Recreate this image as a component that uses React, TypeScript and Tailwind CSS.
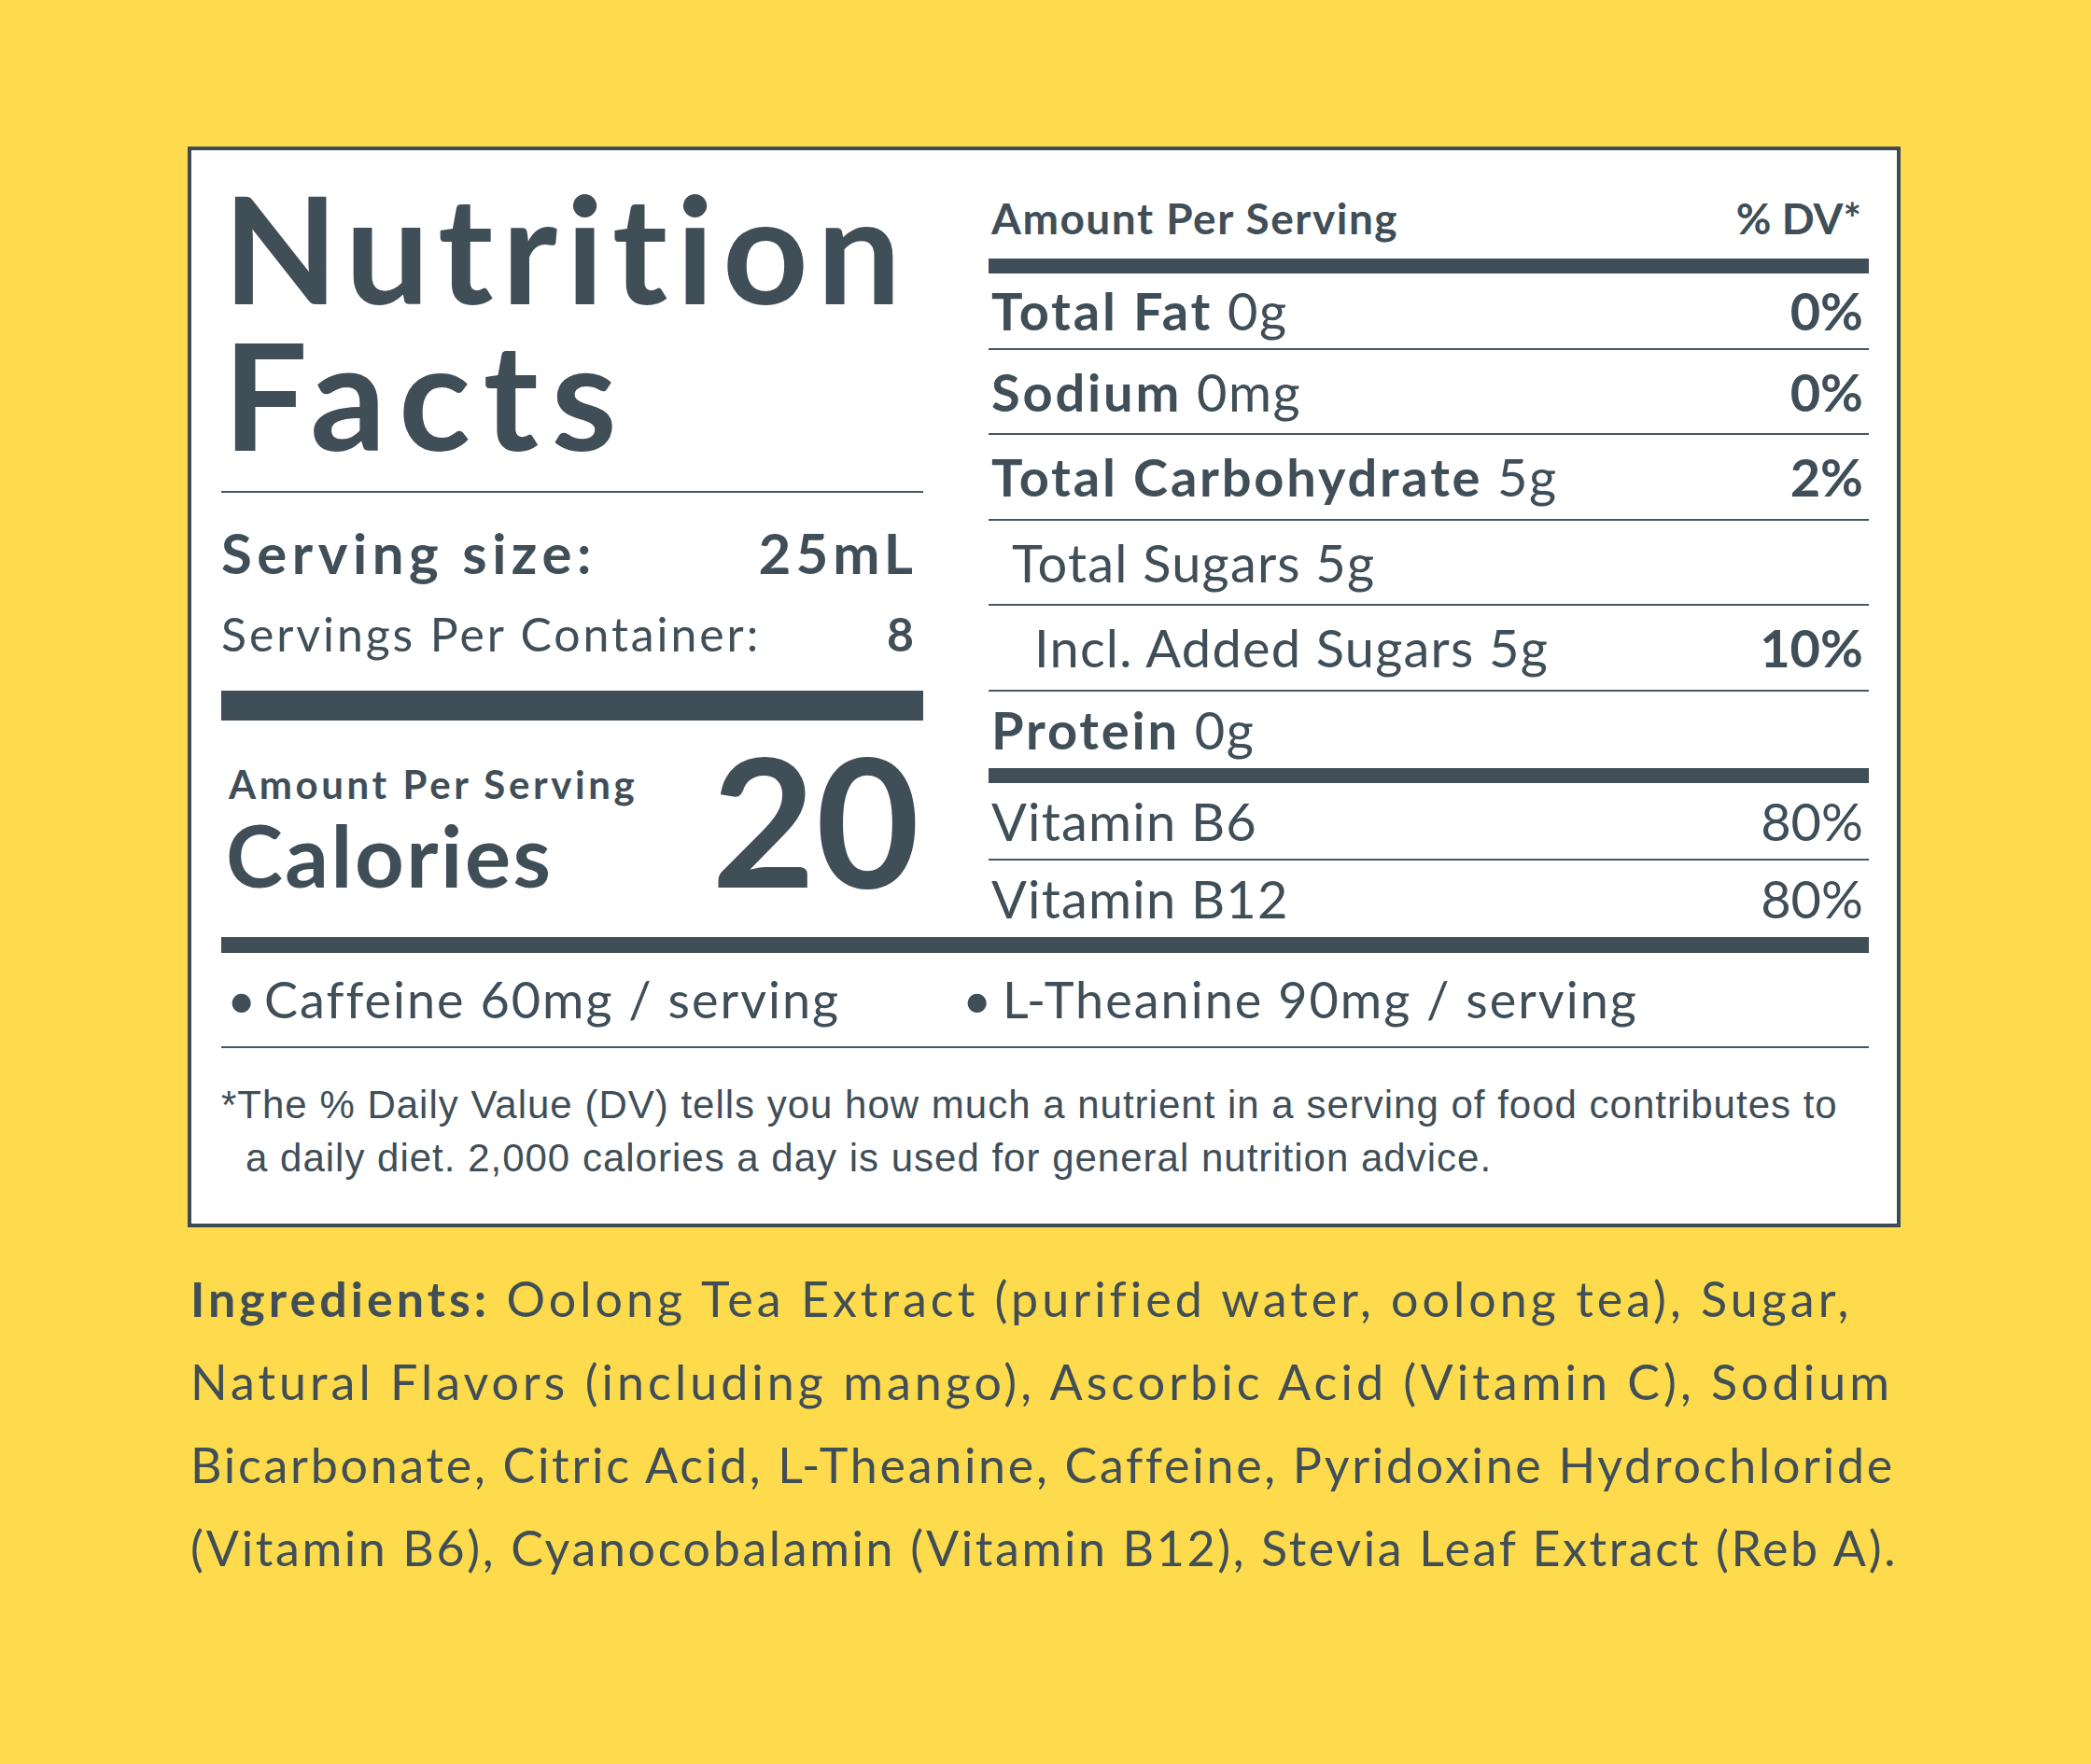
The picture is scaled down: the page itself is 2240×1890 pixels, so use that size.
import React from 'react';

const Row = ({
  label,
  amount,
  dv,
  boldDv = true,
  bold = true,
  indent = '',
  h,
}: {
  label: string;
  amount?: string;
  dv?: string;
  boldDv?: boolean;
  bold?: boolean;
  indent?: string;
  h: string;
}) => (
  <div className={`flex items-center justify-between text-[56px] leading-[64px] ${h}`}>
    <span className={indent}>
      <span className={bold ? 'font-bold tracking-[2.8px]' : 'tracking-[1.2px]'}>{label}</span>
      {amount ? <span className="tracking-[1.5px]"> {amount}</span> : null}
    </span>
    {dv ? <span className={`pr-[6px] ${boldDv ? 'font-bold' : ''}`}>{dv}</span> : null}
  </div>
);

const Thin = () => <div className="h-[2px] bg-[#4a5760]" />;

export default function App() {
  return (
    <div className="w-[2240px] h-[1890px] bg-[#fddb4c] pt-[157px] pl-[201px] font-['Lato',sans-serif] text-[#404e58]">
      <div className="w-[1835px] h-[1158px] border-4 border-[#3e4b54] bg-white pl-[32px] pr-[30px]">
        <div className="grid grid-cols-[752px_943px] gap-x-[70px]">
          {/* left column */}
          <div className="flex flex-col">
            <h1 className="pt-[25px] pl-[2px] text-[160px] leading-[157px] font-bold">
              <span className="block tracking-[9px]">Nutrition</span>
              <span className="block tracking-[13.5px]">Facts</span>
            </h1>
            <div className="mt-[26px] h-[2px] bg-[#4a5760]" />
            <div className="mt-[29px] flex justify-between pr-[6px] text-[60px] leading-[70px] font-bold">
              <span className="tracking-[5.5px]">Serving size:</span>
              <span className="tracking-[5px]">25mL</span>
            </div>
            <div className="mt-[22px] flex justify-between text-[50px] leading-[60px]">
              <span className="tracking-[2.9px]">Servings Per Container:</span>
              <span className="pr-[10px] font-bold">8</span>
            </div>
            <div className="mt-[31px] h-[32px] bg-[#404e58]" />
            <div className="mt-[18px] flex items-end justify-between">
              <div className="flex flex-col pl-[5px]">
                <span className="pl-[3px] text-[42px] leading-[50px] font-bold tracking-[3.6px]">Amount Per Serving</span>
                <span className="mt-[3px] text-[92px] leading-[95px] font-bold tracking-[2.5px]">Calories</span>
              </div>
              <span className="pr-[4px] text-[192px] leading-[173px] font-bold">20</span>
            </div>
          </div>

          {/* right column */}
          <div className="flex flex-col">
            <div className="mt-[45px] flex justify-between pl-[3px] pr-[8px] text-[46px] leading-[56px] font-bold">
              <span className="tracking-[1.5px]">Amount Per Serving</span>
              <span>% DV*</span>
            </div>
            <div className="mt-[15px] h-[16px] bg-[#404e58]" />
            <div className="pl-[3px]">
              <Row h="h-[80px]" label="Total Fat" amount="0g" dv="0%" />
            </div>
            <Thin />
            <div className="pl-[3px]">
              <Row h="h-[89px]" label="Sodium" amount="0mg" dv="0%" />
            </div>
            <Thin />
            <div className="pl-[3px]">
              <Row h="h-[90px]" label="Total Carbohydrate" amount="5g" dv="2%" />
            </div>
            <Thin />
            <div className="pl-[3px]">
              <Row h="h-[89px]" label="Total Sugars 5g" bold={false} indent="pl-[22px]" />
            </div>
            <Thin />
            <div className="pl-[3px]">
              <Row h="h-[90px]" label="Incl. Added Sugars 5g" bold={false} indent="pl-[46px]" dv="10%" />
            </div>
            <Thin />
            <div className="pl-[3px]">
              <Row h="h-[82px]" label="Protein" amount="0g" />
            </div>
            <div className="h-[16px] bg-[#404e58]" />
            <div className="pl-[3px]">
              <Row h="h-[81px]" label="Vitamin B6" bold={false} dv="80%" boldDv={false} />
            </div>
            <Thin />
            <div className="pl-[3px]">
              <Row h="h-[82px]" label="Vitamin B12" bold={false} dv="80%" boldDv={false} />
            </div>
          </div>
        </div>

        <div className="h-[17px] bg-[#404e58]" />
        <div className="flex h-[100px] items-center pl-[6px] text-[54px] leading-[64px] tracking-[2px]">
          <div className="flex w-[788px] items-center">
            <span className="w-[40px]">•</span>
            <span>Caffeine 60mg / serving</span>
          </div>
          <div className="flex items-center">
            <span className="w-[43px]">•</span>
            <span>L-Theanine 90mg / serving</span>
          </div>
        </div>
        <Thin />
        <p className="mt-[32px] pl-[26px] -indent-[26px] font-['Liberation_Sans',Arial,sans-serif] text-[42px] leading-[57px] tracking-[1px] whitespace-nowrap">
          *The % Daily Value (DV) tells you how much a nutrient in a serving of food contributes to
          <br />
          a daily diet. 2,000 calories a day is used for general nutrition advice.
        </p>
      </div>

      <p className="mt-[32px] pl-[3px] text-[52px] leading-[89px] whitespace-nowrap">
        <span className="block tracking-[4px]">
          <span className="font-bold">Ingredients:</span> Oolong Tea Extract (purified water, oolong tea), Sugar,
        </span>
        <span className="block tracking-[4px]">Natural Flavors (including mango), Ascorbic Acid (Vitamin C), Sodium</span>
        <span className="block tracking-[2.7px]">Bicarbonate, Citric Acid, L-Theanine, Caffeine, Pyridoxine Hydrochloride</span>
        <span className="block tracking-[2.6px]">(Vitamin B6), Cyanocobalamin (Vitamin B12), Stevia Leaf Extract (Reb A).</span>
      </p>
    </div>
  );
}
